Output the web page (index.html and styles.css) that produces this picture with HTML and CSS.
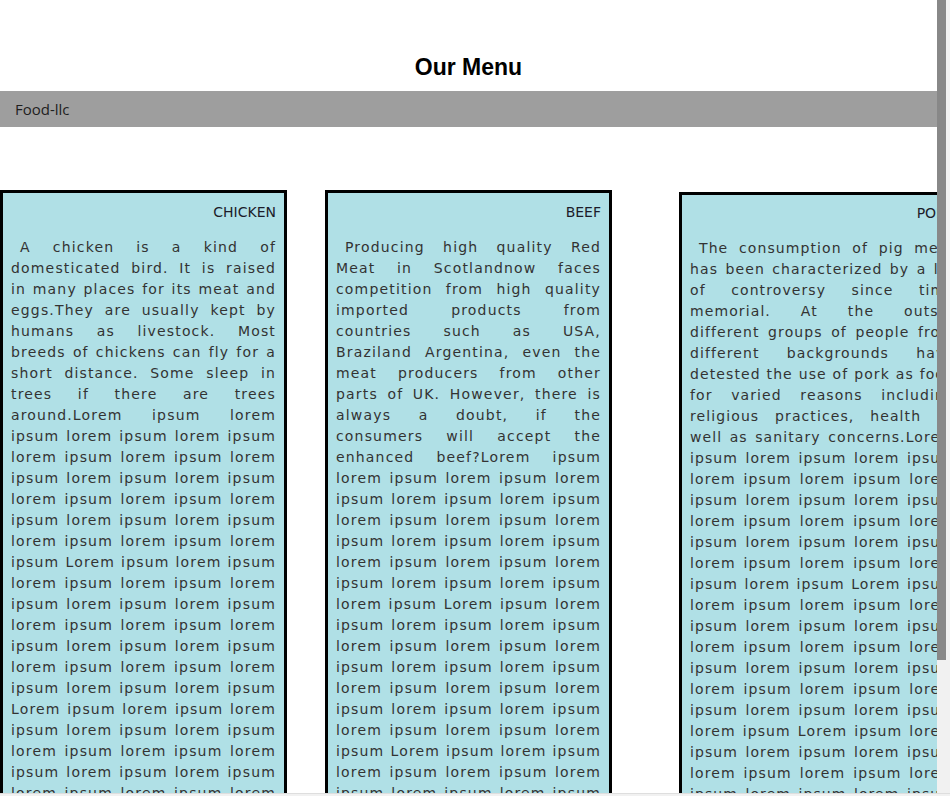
FILE: index.html
```html
<!DOCTYPE html>
<html lang="en">
<head>
<meta charset="utf-8">
<title>Our Menu</title>
<link rel="stylesheet" href="styles.css">
</head>
<body>
<div class="window">
  <div class="viewport">
    <div class="page">
      <header class="top">
        <h1 class="title">Our Menu</h1>
      </header>
      <nav class="bar">Food-llc</nav>
      <main class="menu">
        <section class="card card-chicken">
          <h2 class="card-title">CHICKEN</h2>
          <p class="card-text">A chicken is a kind of domesticated bird. It is raised in many places for its meat and eggs.They are usually kept by humans as livestock. Most breeds of chickens can fly for a short distance. Some sleep in trees if there are trees around.Lorem ipsum lorem ipsum lorem ipsum lorem ipsum lorem ipsum lorem ipsum lorem ipsum lorem ipsum lorem ipsum lorem ipsum lorem ipsum lorem ipsum lorem ipsum lorem ipsum lorem ipsum lorem ipsum lorem ipsum Lorem ipsum lorem ipsum lorem ipsum lorem ipsum lorem ipsum lorem ipsum lorem ipsum lorem ipsum lorem ipsum lorem ipsum lorem ipsum lorem ipsum lorem ipsum lorem ipsum lorem ipsum lorem ipsum lorem ipsum Lorem ipsum lorem ipsum lorem ipsum lorem ipsum lorem ipsum lorem ipsum lorem ipsum lorem ipsum lorem ipsum lorem ipsum lorem ipsum lorem ipsum lorem ipsum lorem ipsum lorem ipsum lorem ipsum lorem ipsum Lorem ipsum lorem ipsum lorem ipsum lorem ipsum lorem ipsum lorem ipsum lorem ipsum</p>
        </section>
        <section class="card card-beef">
          <h2 class="card-title">BEEF</h2>
          <p class="card-text">Producing high quality Red Meat in Scotlandnow faces competition from high quality imported products from countries such as USA, Braziland Argentina, even the meat producers from other parts of UK. However, there is always a doubt, if the consumers will accept the enhanced beef?Lorem ipsum lorem ipsum lorem ipsum lorem ipsum lorem ipsum lorem ipsum lorem ipsum lorem ipsum lorem ipsum lorem ipsum lorem ipsum lorem ipsum lorem ipsum lorem ipsum lorem ipsum lorem ipsum lorem ipsum Lorem ipsum lorem ipsum lorem ipsum lorem ipsum lorem ipsum lorem ipsum lorem ipsum lorem ipsum lorem ipsum lorem ipsum lorem ipsum lorem ipsum lorem ipsum lorem ipsum lorem ipsum lorem ipsum lorem ipsum Lorem ipsum lorem ipsum lorem ipsum lorem ipsum lorem ipsum lorem ipsum lorem ipsum lorem ipsum lorem ipsum lorem ipsum lorem ipsum lorem ipsum lorem ipsum lorem ipsum lorem ipsum lorem ipsum lorem ipsum Lorem ipsum lorem ipsum lorem ipsum lorem ipsum lorem ipsum</p>
        </section>
        <section class="card card-pork">
          <h2 class="card-title">PORK</h2>
          <p class="card-text">The consumption of pig meat has been characterized by a lot of controversy since time memorial. At the outset different groups of people from different backgrounds have detested the use of pork as food for varied reasons including religious practices, health as well as sanitary concerns.Lorem ipsum lorem ipsum lorem ipsum lorem ipsum lorem ipsum lorem ipsum lorem ipsum lorem ipsum lorem ipsum lorem ipsum lorem ipsum lorem ipsum lorem ipsum lorem ipsum lorem ipsum lorem ipsum lorem ipsum Lorem ipsum lorem ipsum lorem ipsum lorem ipsum lorem ipsum lorem ipsum lorem ipsum lorem ipsum lorem ipsum lorem ipsum lorem ipsum lorem ipsum lorem ipsum lorem ipsum lorem ipsum lorem ipsum lorem ipsum Lorem ipsum lorem ipsum lorem ipsum lorem ipsum lorem ipsum lorem ipsum lorem ipsum lorem ipsum lorem ipsum lorem ipsum lorem ipsum lorem ipsum lorem ipsum lorem ipsum lorem ipsum lorem ipsum lorem ipsum Lorem ipsum lorem ipsum lorem ipsum lorem ipsum lorem ipsum</p>
        </section>
      </main>
    </div>
    <div class="vscroll"><div class="vthumb"></div></div>
  </div>
  <div class="hscroll"></div>
</div>
</body>
</html>
```

FILE: styles.css
```css
html {
  background: #ffffff;
}

body {
  margin: 0;
  font-family: "DejaVu Sans", Verdana, sans-serif;
  color: #333333;
}

.window {
  height: 100vh;
  display: flex;
  flex-direction: column;
  overflow: hidden;
}

.viewport {
  flex: 1;
  min-height: 0;
  display: flex;
}

.page {
  flex: 1;
  min-width: 0;
  overflow: hidden;
}

.vscroll {
  flex: 0 0 13px;
  background: #f1f1f1;
}

.vthumb {
  width: 9px;
  height: 660px;
  background: #888888;
}

.hscroll {
  flex: 0 0 3px;
  box-sizing: border-box;
  border-top: 1px solid #dedede;
  background: #f1f1f1;
}

.top {
  padding: 54px 0 10px;
}

.title {
  margin: 0;
  text-align: center;
  font-family: "Liberation Sans", Arial, sans-serif;
  font-size: 23px;
  line-height: 27px;
  font-weight: bold;
  color: #000000;
}

.bar {
  height: 36px;
  line-height: 36px;
  padding-left: 15px;
  background: #9e9e9e;
  font-family: "Open Sans", "Segoe UI", sans-serif;
  font-size: 15px;
  color: #1e1e1e;
}

.menu {
  display: flex;
  align-items: flex-start;
  margin-top: 63px;
}

.card {
  flex: 0 0 287px;
  box-sizing: border-box;
  border: 3px solid #000000;
  background: #b0e0e6;
  padding: 9px 8px 8px;
}

.card-beef {
  margin-left: 38px;
}

.card-pork {
  margin-left: 67px;
  margin-top: 2px;
  padding-top: 8px;
}

.card-title {
  margin: 0;
  text-align: right;
  font-size: 14px;
  line-height: 21px;
  font-weight: normal;
  color: #1c1c2a;
}

.card-text {
  margin: 14px 0;
  font-size: 14px;
  line-height: 21px;
  letter-spacing: 1.17px;
  text-align: justify;
  text-indent: 9px;
  color: #333333;
}

.card-pork .card-text {
  letter-spacing: 1.1px;
}
```
